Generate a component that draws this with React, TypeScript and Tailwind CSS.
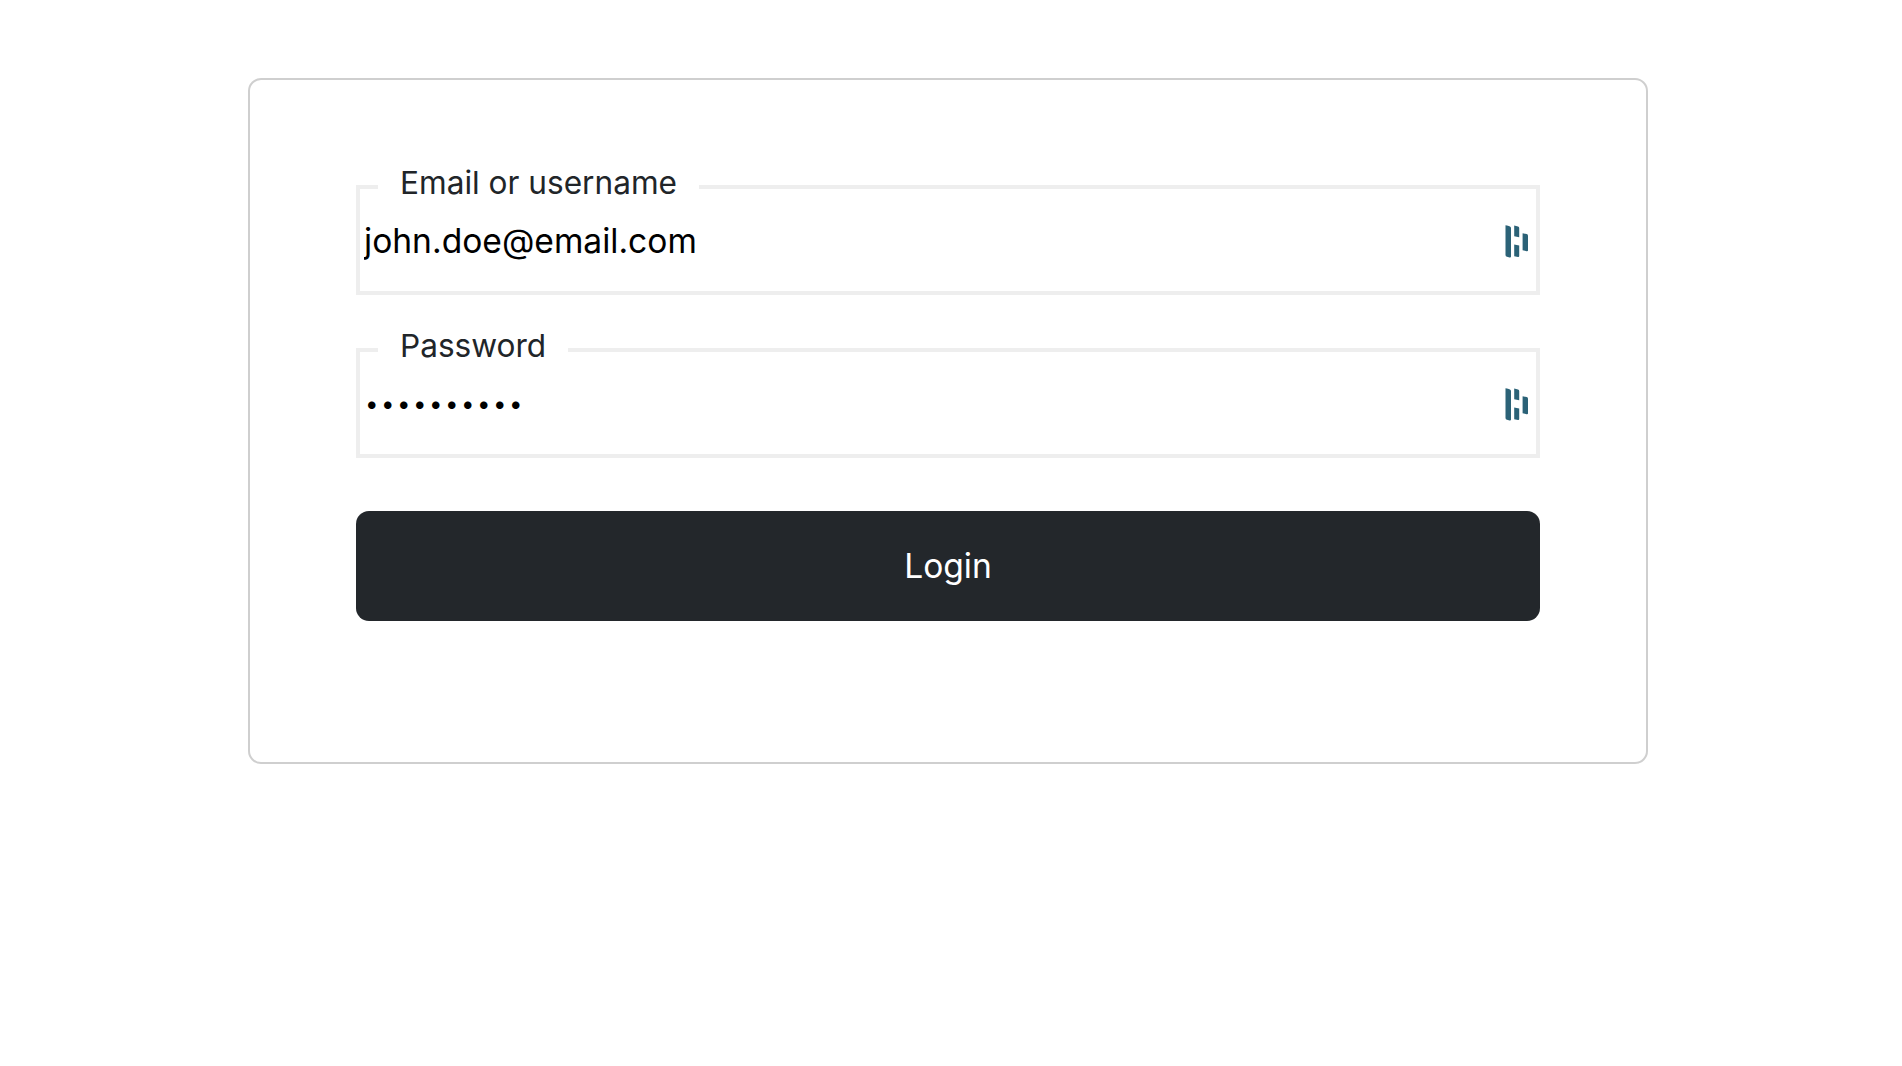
const DashIcon = () => (
  <svg width="26" height="36" viewBox="0 0 26 36" className="shrink-0" fill="#2b6277">
    <path d="M1.5 3.2 L3 3.4 Q7 4 7 6 L7 34.4 Q7 35.6 5.6 35.4 L3 34.8 Q1.5 34.4 1.5 33 Z" />
    <path d="M10.2 3.6 L14 4.4 Q15.2 4.8 15.2 6 L15.2 15.2 L10.2 14.2 Z" />
    <path d="M10.2 22.6 L15.2 23.6 L15.2 34 Q15.2 35.2 14 35 L10.2 34.2 Z" />
    <path d="M18.6 11.2 L22.6 12 Q24 12.4 24 13.6 L24 28.4 Q24 29.4 22.6 29.2 L18.6 28.2 Z" />
  </svg>
);

const Field = ({ label, value, type = 'text' }: { label: string; value: string; type?: string }) => {
  const inputClass =
    type === 'password'
      ? 'flex-1 min-w-0 pl-[5px] pt-[2px] text-[24px] tracking-[2.5px] text-black bg-transparent outline-none'
      : 'flex-1 min-w-0 pl-[4px] pt-[3px] text-[33.6px] text-black bg-transparent outline-none';

  return (
    <fieldset className="border-4 border-[#eeeeee] h-[137px] min-w-0 p-0">
      <legend className="ml-[18px] px-[22px] pt-[1px] pb-[9px] text-[31.6px] leading-[48px] text-[#212529]">{label}</legend>
      <div className="flex items-center h-[48px] pr-[6px]">
        <input type={type} defaultValue={value} className={inputClass} />
        <DashIcon />
      </div>
    </fieldset>
  );
};

export default function App() {
  return (
    <div className="min-h-screen bg-white pt-[78px] font-['Inter',sans-serif]">
      <div className="w-[1400px] h-[686px] ml-[248px] border-2 border-[#cfcfcf] rounded-[13px] pt-[78px] px-[106px]">
        <form className="flex flex-col">
          <Field label="Email or username" value="john.doe@email.com" />
          <div className="mt-[26px]">
            <Field label="Password" value="password12" type="password" />
          </div>
          <button
            type="button"
            className="mt-[53px] h-[110px] rounded-[13px] bg-[#23272b] text-white text-[33.6px]"
          >
            Login
          </button>
        </form>
      </div>
    </div>
  );
}
